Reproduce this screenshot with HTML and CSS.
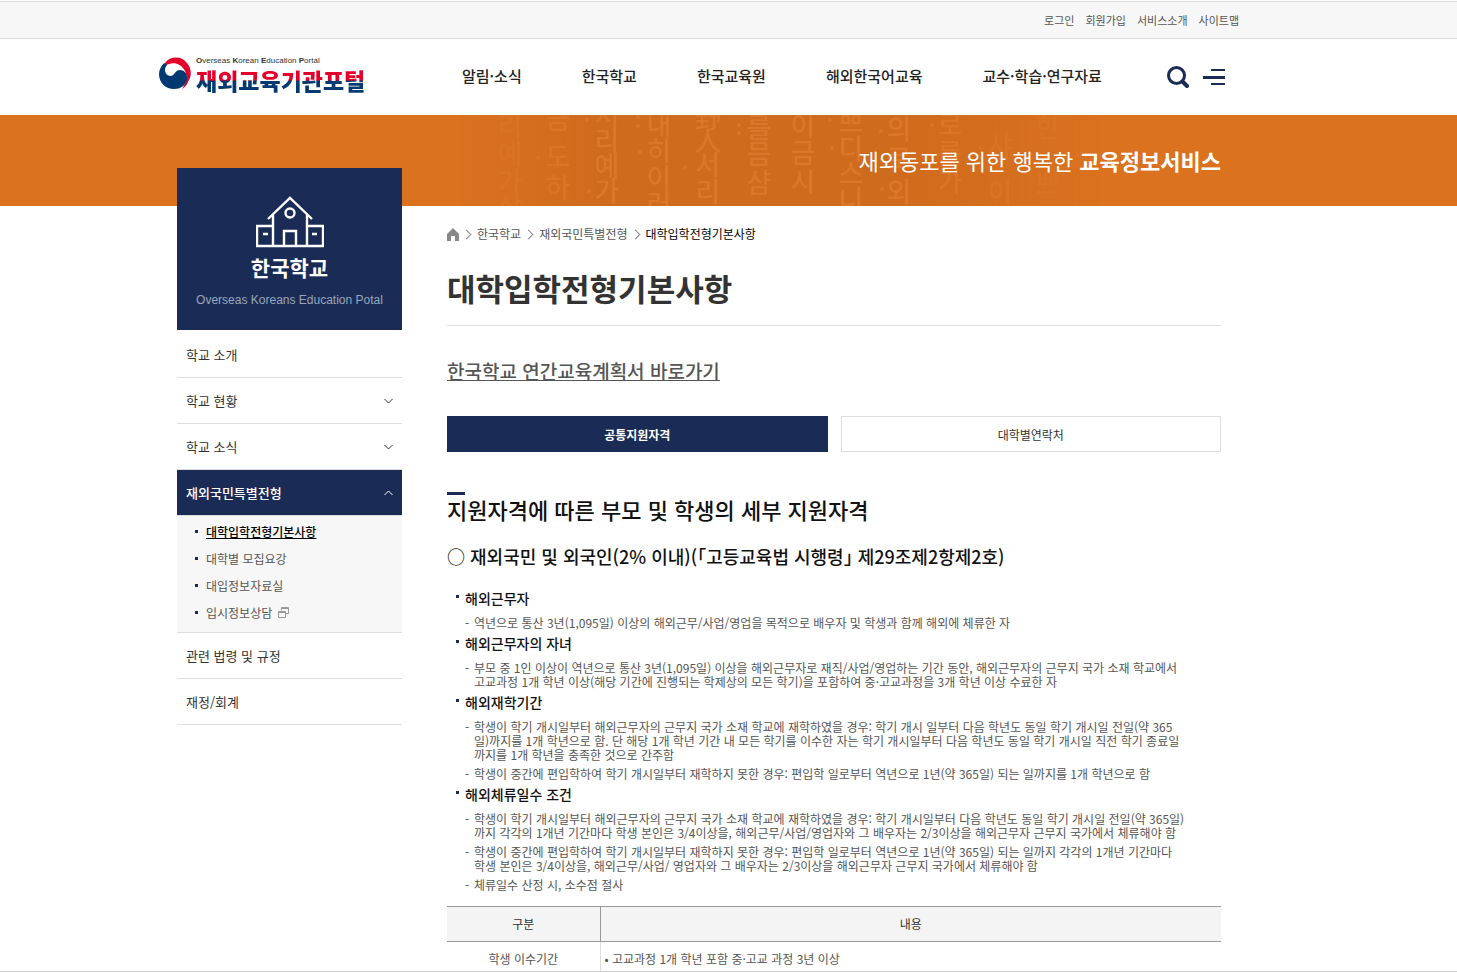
FILE: index.html
```
<!DOCTYPE html>
<html lang="ko">
<head>
    <meta charset="UTF-8">
    <meta name="viewport" content="width=device-width, initial-scale=1.0">
    <title>대학입학전형기본사항 | 재외교육기관포털</title>
    <link rel="stylesheet" href="styles.css">
</head>
<body>
    <div class="top-bar">
        <ul class="inner top-links">
            <li><a href="#">로그인</a></li>
            <li><a href="#">회원가입</a></li>
            <li><a href="#">서비스소개</a></li>
            <li><a href="#">사이트맵</a></li>
        </ul>
    </div>

    <header class="header">
        <div class="inner header-inner">
            <a href="#" class="logo">
                <svg class="logo-mark" width="33" height="33" viewBox="0 0 33 33" aria-hidden="true">
                    <path fill="#e4002b" d="M6 6C11-1 22-1 27 5c6 6 6 14 2 20-1 3-3 5-6 7 4-6 6-12 3-18C22 6 13 4 6 9z"/>
                    <path fill="#003a70" d="M5 6C2 9 0 13 0 17c0 9 7 15 15 15 8 0 13-5 13-11 0-5-3-8-7-8-5 0-5 5-9 6-4 0-6-3-6-6 0-2 1-4 2-5z"/>
                </svg>
                <span class="logo-text">
                    <span class="logo-en"><b>O</b>verseas <b>K</b>orean <b>E</b>ducation <b>P</b>ortal</span>
                    <span class="logo-ko">재외교육기관포털</span>
                </span>
            </a>
            <nav>
                <ul class="gnb">
                    <li><a href="#">알림·소식</a></li>
                    <li><a href="#">한국학교</a></li>
                    <li><a href="#">한국교육원</a></li>
                    <li><a href="#">해외한국어교육</a></li>
                    <li><a href="#">교수·학습·연구자료</a></li>
                </ul>
            </nav>
            <div class="header-buttons">
                <button type="button" aria-label="검색">
                    <svg width="22" height="22" viewBox="0 0 22 22" fill="none" stroke="#1a2c56">
                        <circle cx="9.5" cy="9.5" r="8" stroke-width="3"/>
                        <path d="M15.5 15.5l4.500 4.500" stroke-width="4" stroke-linecap="round"/>
                    </svg>
                </button>
                <button type="button" aria-label="전체메뉴">
                    <svg width="22" height="22" viewBox="0 0 22 22" fill="#1a2c56">
                        <path d="M8 3h14v2H8zM0 10h22v3H0zM8 17h14v2H8z"/>
                    </svg>
                </button>
            </div>
        </div>
    </header>

    <div class="visual">
        <div class="inner visual-inner">
            <svg class="visual-letters" width="640" height="91" viewBox="0 0 640 91" aria-hidden="true">
                <defs>
                    <linearGradient id="fade">
                        <stop offset="0" stop-color="#fff" stop-opacity="0"/>
                        <stop offset=".22" stop-color="#fff"/>
                        <stop offset=".68" stop-color="#fff"/>
                        <stop offset="1" stop-color="#fff" stop-opacity="0"/>
                    </linearGradient>
                    <mask id="fade-mask"><rect width="640" height="91" fill="url(#fade)"/></mask>
                </defs>
                <g mask="url(#fade-mask)">
                    <rect width="640" height="91" fill="#cf6b1d"/>
                    <g class="letters">
                        <text x="50" y="21">리</text><text x="50" y="49">예</text><text x="50" y="77">가</text><text x="50" y="102">상</text>
                        <text x="98" y="14">금</text><text x="98" y="52">도</text><text x="98" y="82">하</text>
                        <text x="147" y="11">서</text><text x="147" y="36">리</text><text x="147" y="61">예</text><text x="147" y="86">가</text>
                        <text x="199" y="20">내</text><text x="199" y="46">히</text><text x="199" y="73">이</text><text x="199" y="99">러</text>
                        <text x="248" y="13">野</text><text x="248" y="36">人</text><text x="248" y="60">서</text><text x="248" y="87">리</text>
                        <text x="299" y="23">를</text><text x="299" y="49">믐</text><text x="299" y="78">샴</text>
                        <text x="343" y="21">이</text><text x="343" y="48">금</text><text x="343" y="77">시</text>
                        <text x="391" y="17">쁘</text><text x="391" y="44">디</text><text x="391" y="69">스</text><text x="391" y="95">니</text>
                        <text x="439" y="24">의</text><text x="439" y="54">로</text><text x="439" y="87">외</text>
                        <text x="490" y="20">로</text><text x="490" y="49">를</text><text x="490" y="77">가</text>
                        <text x="540" y="41">샤</text><text x="540" y="87">이</text>
                        <text x="588" y="22">한</text><text x="588" y="79">쁘</text>
                    </g>
                    <g fill="#da772a">
                        <circle cx="78" cy="43" r="2"/><circle cx="127" cy="5" r="2"/><circle cx="129" cy="76" r="2"/>
                        <circle cx="178" cy="2" r="2"/><circle cx="178" cy="11" r="2"/><circle cx="180" cy="37" r="2"/>
                        <circle cx="225" cy="52" r="2"/><circle cx="279" cy="10" r="2"/><circle cx="279" cy="18" r="2"/>
                        <circle cx="370" cy="5" r="2"/><circle cx="372" cy="33" r="2"/><circle cx="421" cy="16" r="2"/>
                        <circle cx="422" cy="74" r="2"/><circle cx="472" cy="10" r="2"/><circle cx="520" cy="33" r="2"/>
                    </g>
                </g>
            </svg>
            <p class="visual-text">재외동포를 위한 행복한 <strong>교육정보서비스</strong></p>
        </div>
    </div>

    <div class="page">
        <div class="inner page-inner">
            <aside class="side">
                <div class="side-title">
                    <svg width="68" height="52" viewBox="0 0 68 52" fill="none" stroke="#fff" stroke-width="2.400" aria-hidden="true">
                        <path d="M12 23L34 2l22 21"/>
                        <path d="M17 19v31M51 19v31M17 30H1v20h66V30H51"/>
                        <path d="M28 50V35h12v15"/>
                        <circle cx="34" cy="17" r="4.500"/>
                        <path d="M7 38h5M56 38h5"/>
                    </svg>
                    <h2>한국학교</h2>
                    <p>Overseas Koreans Education Potal</p>
                </div>
                <ul class="side-menu">
                    <li><a href="#">학교 소개</a></li>
                    <li>
                        <a href="#">학교 현황
                            <svg width="9" height="6" viewBox="0 0 9 6"><path d="M.5 1l4 4 4-4"/></svg>
                        </a>
                    </li>
                    <li>
                        <a href="#">학교 소식
                            <svg width="9" height="6" viewBox="0 0 9 6"><path d="M.5 1l4 4 4-4"/></svg>
                        </a>
                    </li>
                    <li class="active">
                        <a href="#">재외국민특별전형
                            <svg width="9" height="6" viewBox="0 0 9 6"><path d="M.5 5l4-4 4 4"/></svg>
                        </a>
                        <ul class="sub-menu">
                            <li><a href="#" class="current">대학입학전형기본사항</a></li>
                            <li><a href="#">대학별 모집요강</a></li>
                            <li><a href="#">대입정보자료실</a></li>
                            <li>
                                <a href="#">입시정보상담</a>
                                <svg width="11" height="11" viewBox="0 0 11 11"><path d="M3.500 3.500v-3h7v6h-3M.5 4.500h7v6h-7zM3 1.500h7M1 5.500h6"/></svg>
                            </li>
                        </ul>
                    </li>
                    <li><a href="#">관련 법령 및 규정</a></li>
                    <li><a href="#">재정/회계</a></li>
                </ul>
            </aside>

            <main class="content">
                <ol class="breadcrumb">
                    <li>
                        <a href="#" aria-label="홈">
                            <svg width="12" height="13" viewBox="0 0 12 13" fill="#888"><path d="M6 0l6 6v7H8V8H4v5H0V6z"/></svg>
                        </a>
                    </li>
                    <li><a href="#">한국학교</a></li>
                    <li><a href="#">재외국민특별전형</a></li>
                    <li><a href="#" class="current">대학입학전형기본사항</a></li>
                </ol>

                <h1>대학입학전형기본사항</h1>

                <a href="#" class="plan-link">한국학교 연간교육계획서 바로가기</a>

                <div class="tabs">
                    <button type="button" class="active">공통지원자격</button>
                    <button type="button">대학별연락처</button>
                </div>

                <h3>지원자격에 따른 부모 및 학생의 세부 지원자격</h3>
                <h4><span class="circle">○</span> 재외국민 및 외국인(2% 이내)(｢고등교육법 시행령｣ 제29조제2항제2호)</h4>

                <ul class="rules">
                    <li>
                        <strong>해외근무자</strong>
                        <ul>
                            <li>역년으로 통산 3년(1,095일) 이상의 해외근무/사업/영업을 목적으로 배우자 및 학생과 함께 해외에 체류한 자</li>
                        </ul>
                    </li>
                    <li>
                        <strong>해외근무자의 자녀</strong>
                        <ul>
                            <li>부모 중 1인 이상이 역년으로 통산 3년(1,095일) 이상을 해외근무자로 재직/사업/영업하는 기간 동안, 해외근무자의 근무지 국가 소재 학교에서<br>고교과정 1개 학년 이상(해당 기간에 진행되는 학제상의 모든 학기)을 포함하여 중·고교과정을 3개 학년 이상 수료한 자</li>
                        </ul>
                    </li>
                    <li>
                        <strong>해외재학기간</strong>
                        <ul>
                            <li>학생이 학기 개시일부터 해외근무자의 근무지 국가 소재 학교에 재학하였을 경우: 학기 개시 일부터 다음 학년도 동일 학기 개시일 전일(약 365<br>일)까지를 1개 학년으로 함. 단 해당 1개 학년 기간 내 모든 학기를 이수한 자는 학기 개시일부터 다음 학년도 동일 학기 개시일 직전 학기 종료일<br>까지를 1개 학년을 충족한 것으로 간주함</li>
                            <li>학생이 중간에 편입학하여 학기 개시일부터 재학하지 못한 경우: 편입학 일로부터 역년으로 1년(약 365일) 되는 일까지를 1개 학년으로 함</li>
                        </ul>
                    </li>
                    <li>
                        <strong>해외체류일수 조건</strong>
                        <ul>
                            <li>학생이 학기 개시일부터 해외근무자의 근무지 국가 소재 학교에 재학하였을 경우: 학기 개시일부터 다음 학년도 동일 학기 개시일 전일(약 365일)<br>까지 각각의 1개년 기간마다 학생 본인은 3/4이상을, 해외근무/사업/영업자와 그 배우자는 2/3이상을 해외근무자 근무지 국가에서 체류해야 함</li>
                            <li>학생이 중간에 편입학하여 학기 개시일부터 재학하지 못한 경우: 편입학 일로부터 역년으로 1년(약 365일) 되는 일까지 각각의 1개년 기간마다<br>학생 본인은 3/4이상을, 해외근무/사업/ 영업자와 그 배우자는 2/3이상을 해외근무자 근무지 국가에서 체류해야 함</li>
                            <li>체류일수 산정 시, 소수점 절사</li>
                        </ul>
                    </li>
                </ul>

                <table class="rule-table">
                    <thead>
                        <tr><th scope="col">구분</th><th scope="col">내용</th></tr>
                    </thead>
                    <tbody>
                        <tr><td>학생 이수기간</td><td>• 고교과정 1개 학년 포함 중·고교 과정 3년 이상</td></tr>
                    </tbody>
                </table>
            </main>
        </div>
    </div>
</body>
</html>
```
FILE: styles.css
```
* {
    box-sizing: border-box;
}

body {
    margin: 0;
    font-family: "Noto Sans CJK KR", sans-serif;
    font-size: 12px;
    color: #333;
    background: #fff;
}

ul, ol {
    list-style: none;
    margin: 0;
    padding: 0;
}

h1, h2, h3, h4, p {
    margin: 0;
}

a {
    color: inherit;
    text-decoration: none;
}

button {
    font-family: inherit;
    padding: 0;
    cursor: pointer;
}

svg {
    display: block;
}

.top-bar, .header, .visual, .page {
    padding-right: 59px;
}

.inner {
    max-width: 1080px;
    margin: 0 auto;
}

/* top bar */
.top-bar {
    margin-top: 1px;
    background: #f7f7f7;
    border-top: 1px solid #ddd;
    border-bottom: 1px solid #ddd;
}

.top-links {
    display: flex;
    justify-content: flex-end;
    gap: 11px;
    font-size: 11px;
    line-height: 36px;
    color: #555;
}

/* header */
.header-inner {
    display: flex;
    align-items: center;
    height: 76px;
}

.logo {
    display: flex;
    gap: 4px;
    width: 303px;
    padding-bottom: 4px;
}

.logo-mark {
    margin-top: 1px;
}

.logo-text {
    display: flex;
    flex-direction: column;
}

.logo-en {
    font-family: "Liberation Sans", sans-serif;
    font-size: 8px;
    line-height: 10px;
    color: #333;
}

.logo-ko {
    font-size: 23px;
    font-weight: 900;
    line-height: 28px;
    color: transparent;
    background: linear-gradient(#e4002b 50%, #003a70 54%);
    background-clip: text;
    -webkit-background-clip: text;
}

.gnb {
    display: flex;
    gap: 60px;
    padding-bottom: 4px;
    font-size: 15px;
    font-weight: 500;
    color: #222;
}

.header-buttons {
    display: flex;
    gap: 14px;
    margin-left: auto;
    padding-right: 14px;
}

.header-buttons button {
    background: none;
    border: 0;
}

/* orange banner */
.visual {
    background: #da7220;
}

.visual-inner {
    position: relative;
    height: 91px;
    padding-right: 18px;
}

.visual-letters {
    position: absolute;
    left: 301px;
    top: 0;
}

.letters {
    font-size: 27px;
    font-weight: 500;
    fill: #da772a;
    text-anchor: middle;
}

.visual-text {
    position: relative;
    font-size: 22px;
    line-height: 91px;
    text-align: right;
    color: #fff;
}

/* page */
.page {
    border-bottom: 1px solid #ccc;
}

.page-inner {
    display: flex;
    align-items: flex-start;
    gap: 45px;
    padding: 0 18px;
}

.side {
    position: relative;
    flex: 0 0 225px;
    margin-top: -38px;
}

.side-title {
    display: flex;
    flex-direction: column;
    align-items: center;
    height: 162px;
    padding-top: 28px;
    background: #1a2c56;
    color: #fff;
}

.side-title h2 {
    margin-top: 3px;
    font-size: 21px;
    line-height: 32px;
}

.side-title p {
    margin-top: 9px;
    font-family: "Liberation Sans", sans-serif;
    font-size: 12px;
    line-height: 16px;
    color: #9ba5bb;
}

.side-menu {
    padding-top: 1px;
    font-size: 13px;
}

.side-menu > li {
    border-bottom: 1px solid #ddd;
}

.side-menu > li > a {
    display: flex;
    justify-content: space-between;
    align-items: center;
    height: 46px;
    padding: 0 9px;
}

.side-menu > li + li > a {
    height: 45px;
}

.side-menu svg path {
    fill: none;
    stroke: currentColor;
}

.side-menu .active > a {
    background: #1a2c56;
    color: #fff;
    font-weight: 500;
}

.sub-menu {
    padding: 2px 0 6px 18px;
    border-top: 1px solid #ddd;
    background: #f7f7f7;
    font-size: 12px;
    line-height: 27px;
    color: #555;
}

.sub-menu li {
    display: flex;
    align-items: center;
    gap: 6px;
}

.sub-menu li::before {
    content: "";
    width: 3px;
    height: 3px;
    margin-right: 2px;
    background: #1a2c56;
}

.sub-menu svg {
    color: #999;
}

.sub-menu .current {
    color: #000;
    font-weight: 500;
    text-decoration: underline;
}

/* content */
.content {
    flex: 1;
    min-width: 0;
}

.breadcrumb {
    display: flex;
    align-items: center;
    margin-top: 18px;
    line-height: 20px;
    color: #555;
}

.breadcrumb li {
    display: flex;
    align-items: center;
}

.breadcrumb li + li::before {
    content: "";
    width: 6px;
    height: 6px;
    margin: 0 7px 0 4px;
    border-top: 1px solid #888;
    border-right: 1px solid #888;
    transform: rotate(45deg);
}

.breadcrumb .current {
    color: #000;
}

h1 {
    padding: 22px 0 15px;
    border-bottom: 1px solid #ddd;
    font-size: 31px;
    line-height: 44px;
}

.plan-link {
    display: inline-block;
    margin-top: 31px;
    font-size: 19px;
    font-weight: 500;
    line-height: 28px;
    color: #555;
    text-decoration: underline;
}

.tabs {
    display: grid;
    grid-template-columns: 1fr 1fr;
    gap: 13px;
    margin-top: 31px;
}

.tabs button {
    height: 36px;
    border: 1px solid #ddd;
    background: #fff;
    font-size: 12px;
    color: #333;
}

.tabs .active {
    border-color: #1a2c56;
    background: #1a2c56;
    font-weight: 700;
    color: #fff;
}

h3 {
    margin-top: 40px;
    font-size: 22px;
    font-weight: 500;
    line-height: 28px;
    color: #111;
}

h3::before {
    content: "";
    display: block;
    width: 18px;
    height: 3px;
    background: #1a2c56;
}

h4 {
    margin-top: 19px;
    font-size: 18px;
    font-weight: 500;
    line-height: 28px;
    color: #111;
}

.circle {
    font-weight: 400;
}

.rules {
    margin-top: 18px;
    padding-left: 9px;
}

.rules > li {
    margin-bottom: 3px;
}

.rules strong {
    display: flex;
    gap: 6px;
    font-size: 14px;
    font-weight: 500;
    line-height: 20px;
    color: #111;
}

.rules strong::before {
    content: "";
    width: 3px;
    height: 3px;
    margin-top: 7px;
    background: #1a2c56;
}

.rules ul {
    display: grid;
    gap: 5px;
    padding: 8px 0 0 9px;
    line-height: 14px;
    color: #555;
}

.rules ul li {
    display: grid;
    grid-template-columns: 9px 1fr;
}

.rules ul li::before {
    content: "-";
    grid-row: span 3;
}

.rule-table {
    width: 100%;
    margin-top: 14px;
    border-collapse: collapse;
    border-top: 1px solid #999;
    line-height: 18px;
    color: #555;
}

.rule-table th {
    padding: 8px 5px;
    border-bottom: 1px solid #999;
    background: #f4f4f4;
    font-weight: 400;
    color: #333;
}

.rule-table th:first-child {
    width: 153px;
    border-right: 1px solid #999;
}

.rule-table td {
    padding: 8px 4px 3px;
}

.rule-table td:first-child {
    border-right: 1px solid #ddd;
    text-align: center;
}
```
